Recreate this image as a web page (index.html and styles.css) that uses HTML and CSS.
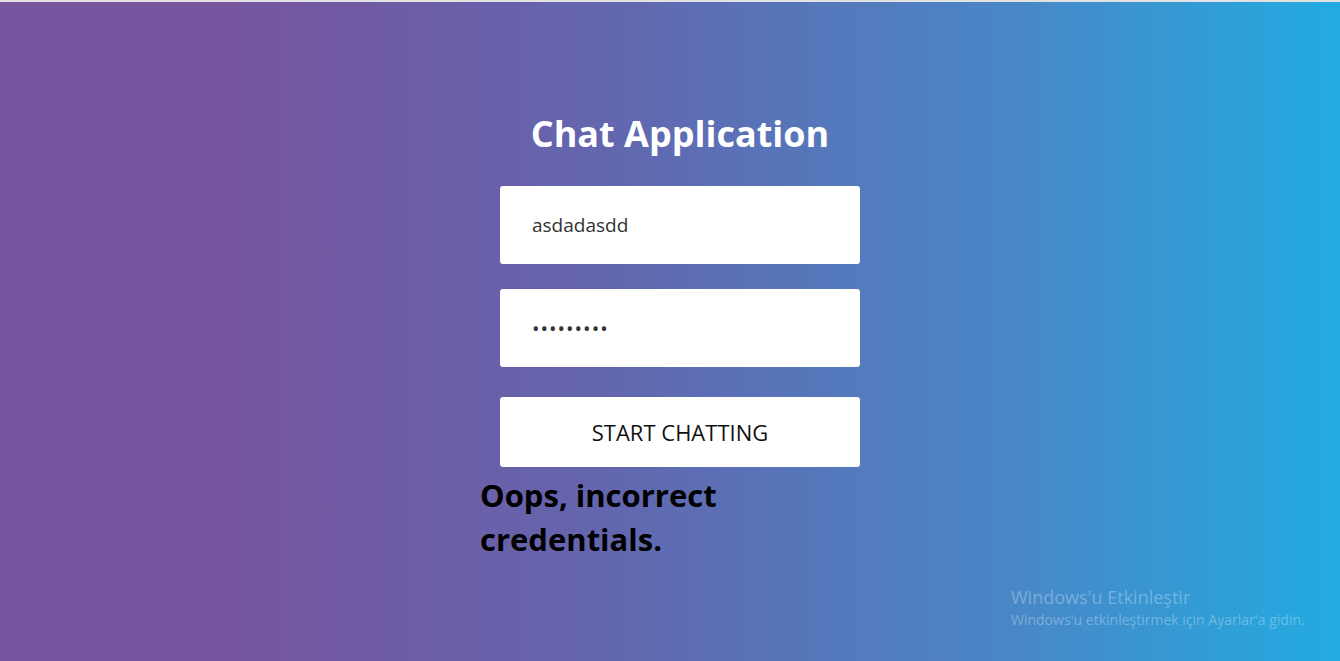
FILE: index.html
```html
<!DOCTYPE html>
<html lang="tr">
<head>
<meta charset="utf-8">
<title>Chat Application</title>
<link rel="stylesheet" href="styles.css">
</head>
<body>
<div class="topline"></div>
<main class="page">
  <div class="login">
    <h1 class="title">Chat Application</h1>
    <form class="form">
      <input class="field" type="text" value="asdadasdd">
      <input class="field field-pass" type="password" value="asdadasdd">
      <button class="btn" type="button">START CHATTING</button>
    </form>
    <h2 class="error">Oops, incorrect credentials.</h2>
  </div>
</main>
<div class="watermark">
  <div class="wm-title">Windows'u Etkinleştir</div>
  <div class="wm-sub">Windows'u etkinleştirmek için Ayarlar'a gidin.</div>
</div>
</body>
</html>
```
FILE: styles.css
```css
html, body {
  margin: 0;
  height: 100%;
}
body {
  font-family: "Open Sans", "Noto Sans", sans-serif;
  background: linear-gradient(to right, #76549e 0%, #76549e 17%, #6366ae 45%, #4a86c6 75%, #22abe1 100%);
  overflow: hidden;
  position: relative;
}
.topline {
  height: 2px;
  background: #e2e2e2;
}
.page {
  display: flex;
  justify-content: center;
  padding-left: 20px;
  padding-top: 108px;
}
.login {
  width: 400px;
  display: flex;
  flex-direction: column;
  align-items: center;
}
.title {
  margin: 0;
  color: #fff;
  font-size: 36px;
  font-weight: 700;
  line-height: 48px;
}
.form {
  margin-top: 28px;
  display: flex;
  flex-direction: column;
  align-items: center;
}
.field {
  box-sizing: border-box;
  width: 360px;
  height: 78px;
  border: none;
  border-radius: 3px;
  background: #fff;
  padding: 0 32px;
  font-family: inherit;
  font-size: 19px;
  color: #333;
  margin-bottom: 25px;
  outline: none;
}
.field-pass {
  margin-bottom: 30px;
  letter-spacing: 1px;
  font-size: 20px;
}
.btn {
  width: 360px;
  height: 70px;
  border: none;
  border-radius: 3px;
  background: #fff;
  font-family: inherit;
  font-size: 22px;
  color: #111;
  cursor: pointer;
}
.error {
  align-self: flex-start;
  max-width: 300px;
  margin: 6px 0 0;
  font-size: 31px;
  font-weight: 700;
  line-height: 44px;
  color: #000;
}
.watermark {
  position: absolute;
  left: 1011px;
  top: 584px;
  color: rgba(255, 255, 255, 0.3);
}
.wm-title {
  font-size: 18px;
  line-height: 26px;
}
.wm-sub {
  font-size: 14px;
  line-height: 20px;
}
```
